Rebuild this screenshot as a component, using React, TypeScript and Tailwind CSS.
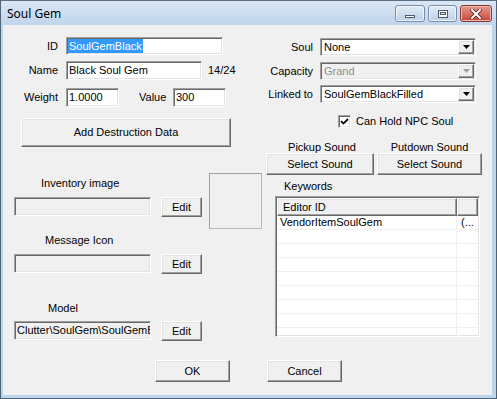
import React from "react";

const sunken =
  "border border-t-[#a0a0a0] border-l-[#a0a0a0] border-r-white border-b-white shadow-[inset_1px_1px_0_#696969,inset_-1px_-1px_0_#e3e3e3]";
const raised =
  "border border-t-white border-l-white border-r-[#696969] border-b-[#696969] shadow-[inset_-1px_-1px_0_#a0a0a0,inset_1px_1px_0_#e3e3e3]";

function Btn({ w, h, children, className = "" }: { w: string; h: string; children?: React.ReactNode; className?: string }) {
  return (
    <div className={`${raised} ${w} ${h} bg-[#f0f0f0] flex items-center justify-center text-black ${className}`}>
      {children}
    </div>
  );
}

function Arrow({ color }: { color: string }) {
  return (
    <svg width="7" height="4" viewBox="0 0 7 4">
      <path d="M0 0H7L3.5 4Z" fill={color} />
    </svg>
  );
}

function Combo({ value, disabled = false }: { value: string; disabled?: boolean }) {
  return (
    <div
      className={`${sunken} w-[156px] h-[18px] p-[1px] flex items-stretch ${disabled ? "bg-[#f0f0f0] text-[#8d8d8d]" : "bg-white text-black"}`}
    >
      <div className="flex-1 flex items-center pl-[2px] whitespace-nowrap overflow-hidden">{value}</div>
      <div className={`${raised} w-[16px] bg-[#f0f0f0] flex items-center justify-center`}>
        <Arrow color={disabled ? "#a0a0a0" : "#000"} />
      </div>
    </div>
  );
}

function Field({ w, h, bg = "bg-white", children }: { w: string; h: string; bg?: string; children?: React.ReactNode }) {
  return (
    <div className={`${sunken} ${w} ${h} ${bg} flex items-center pl-[2px] whitespace-nowrap overflow-hidden`}>
      {children}
    </div>
  );
}

export default function App() {
  return (
    <div className="w-[497px] h-[399px] flex flex-col bg-[#bfd5ec] border-l border-r border-b border-[#4f6378] font-['Liberation_Sans',Arial,sans-serif] text-[11px] leading-[13px] text-black overflow-hidden">
      {/* Title bar */}
      <div className="h-[25px] shrink-0 flex items-start border-t border-[#5b6f86] bg-gradient-to-b from-[#dbe7f4] to-[#bfd5ec] pr-[4px]">
        <div className="pl-[6px] pt-[5px] font-['Noto_Sans',sans-serif] text-[12px] leading-[16px] text-black flex-1">
          Soul Gem
        </div>
        <div className="flex gap-[3px] mt-[4px]">
          <div className="w-[30px] h-[17px] rounded-[3px] border border-[#7a8ea8] bg-gradient-to-b from-[#e4edf7] to-[#bccfe6] shadow-[inset_0_0_0_1px_#eef4fb] flex items-end justify-center pb-[3px]">
            <div className="w-[10px] h-[3px] bg-white border border-[#4a5b70]" />
          </div>
          <div className="w-[29px] h-[17px] rounded-[3px] border border-[#7a8ea8] bg-gradient-to-b from-[#e4edf7] to-[#bccfe6] shadow-[inset_0_0_0_1px_#eef4fb] flex items-center justify-center">
            <div className="w-[10px] h-[8px] border border-[#4a5b70] bg-white flex items-center justify-center">
              <div className="w-[6px] h-[3px] border border-[#4a5b70] bg-[#dbe5f1]" />
            </div>
          </div>
          <div className="w-[32px] h-[17px] rounded-[3px] border border-[#8a3a36] bg-gradient-to-b from-[#e49a8e] to-[#c5453a] shadow-[inset_0_0_0_1px_#eeb6ab] flex items-center justify-center">
            <svg width="12" height="10" viewBox="0 0 12 10">
              <path d="M2 1L10 9M10 1L2 9" stroke="#5a1f1b" strokeWidth="3.6" strokeLinecap="square" />
              <path d="M2 1L10 9M10 1L2 9" stroke="#ffffff" strokeWidth="2" strokeLinecap="square" />
            </svg>
          </div>
        </div>
      </div>

      {/* Client area */}
      <div className="flex-1 ml-[2px] mr-[4px] mb-[3px] bg-[#f0f0f0] flex flex-col">
        <div className="flex items-start pt-[12px]">
          {/* Left column */}
          <div className="ml-[11px] w-[248px] flex flex-col">
            <div className="flex items-center h-[18px]">
              <div className="w-[44px] text-right">ID</div>
              <div className="ml-[8px]">
                <div className={`${sunken} w-[157px] h-[18px] bg-white flex items-stretch p-[1px]`}>
                  <span className="bg-[#3399ff] text-white flex items-center px-[1px]">SoulGemBlack</span>
                </div>
              </div>
            </div>
            <div className="flex items-center h-[19px] mt-[6px]">
              <div className="w-[44px] text-right">Name</div>
              <div className="ml-[8px]">
                <Field w="w-[136px]" h="h-[19px]">Black Soul Gem</Field>
              </div>
              <div className="ml-[6px]">14/24</div>
            </div>
            <div className="flex items-center h-[19px] mt-[8px]">
              <div className="w-[44px] text-right">Weight</div>
              <div className="ml-[8px]">
                <Field w="w-[53px]" h="h-[19px]">1.0000</Field>
              </div>
              <div className="ml-[20px] w-[30px]">Value</div>
              <div className="ml-[4px]">
                <Field w="w-[53px]" h="h-[19px]">300</Field>
              </div>
            </div>
            <Btn w="w-[210px]" h="h-[29px]" className="mt-[11px] ml-[7px]">
              Add Destruction Data
            </Btn>
            <div className="flex items-start">
              <div className="w-[188px] flex flex-col">
                <div className="mt-[30px] ml-[27px]">Inventory image</div>
                <div className="mt-[7px] flex items-start">
                  <Field w="w-[137px]" h="h-[19px]" bg="bg-[#f0f0f0]" />
                  <Btn w="w-[41px]" h="h-[20px]" className="ml-[10px]">Edit</Btn>
                </div>
                <div className="mt-[17px] ml-[31px]">Message Icon</div>
                <div className="mt-[7px] flex items-start">
                  <Field w="w-[137px]" h="h-[19px]" bg="bg-[#f0f0f0]" />
                  <Btn w="w-[41px]" h="h-[20px]" className="ml-[10px]">Edit</Btn>
                </div>
                <div className="mt-[28px] ml-[34px]">Model</div>
                <div className="mt-[6px] flex items-start">
                  <Field w="w-[137px]" h="h-[19px]" bg="bg-[#f0f0f0]">Clutter\SoulGem\SoulGemB</Field>
                  <Btn w="w-[41px]" h="h-[20px]" className="ml-[10px]">Edit</Btn>
                </div>
              </div>
              <div className="ml-[7px] mt-[26px] w-[54px] h-[56px] border border-[#a0a0a0] border-r-[#b8b8b8] border-b-[#b8b8b8] bg-[#f0f0f0]" />
            </div>
          </div>

          {/* Right column */}
          <div className="ml-[4px] w-[216px] flex flex-col mt-[1px]">
            <div className="flex items-center h-[18px]">
              <div className="w-[47px] text-right">Soul</div>
              <div className="ml-[7px]">
                <Combo value="None" />
              </div>
            </div>
            <div className="flex items-center h-[18px] mt-[6px]">
              <div className="w-[47px] text-right">Capacity</div>
              <div className="ml-[7px]">
                <Combo value="Grand" disabled />
              </div>
            </div>
            <div className="flex items-center h-[18px] mt-[5px]">
              <div className="w-[47px] text-right whitespace-nowrap">Linked to</div>
              <div className="ml-[7px]">
                <Combo value="SoulGemBlackFilled" />
              </div>
            </div>
            <div className="flex items-center h-[13px] mt-[12px] ml-[72px]">
              <div className={`${sunken} w-[13px] h-[13px] bg-white flex items-center justify-center`}>
                <svg width="9" height="9" viewBox="0 0 9 9">
                  <path d="M1 4.2L3.4 6.6L8 2" stroke="#000" strokeWidth="1.8" fill="none" />
                </svg>
              </div>
              <div className="ml-[5px]">Can Hold NPC Soul</div>
            </div>
            <div className="flex mt-[13px]">
              <div className="w-[108px] flex flex-col items-center">
                <div className="leading-[12px] h-[12px] pl-[4px]">Pickup Sound</div>
                <Btn w="w-[108px]" h="h-[22px]">Select Sound</Btn>
              </div>
              <div className="w-[105px] ml-[3px] flex flex-col items-center">
                <div className="leading-[12px] h-[12px]">Putdown Sound</div>
                <Btn w="w-[105px]" h="h-[22px]">Select Sound</Btn>
              </div>
            </div>
            <div className="mt-[5px] ml-[18px]">Keywords</div>
            <div className={`${sunken} mt-[3px] ml-[9px] w-[205px] h-[141px] bg-white p-[1px] flex flex-col overflow-hidden`}>
              <div className="flex h-[18px] shrink-0">
                <div className={`${raised} w-[180px] bg-[#f0f0f0] flex items-center pl-[5px]`}>Editor ID</div>
                <div className={`${raised} flex-1 bg-[#f0f0f0]`} />
              </div>
              {["VendorItemSoulGem", "", "", "", "", "", "", "", ""].map((t, i) => (
                <div key={i} className="flex h-[14px] shrink-0 border-b border-[#f0f0f0]">
                  <div className="w-[180px] border-r border-[#f0f0f0] flex items-center pl-[3px]">{t}</div>
                  <div className="flex-1 flex items-center pl-[4px]">{t ? "(..." : ""}</div>
                </div>
              ))}
            </div>
          </div>
        </div>

        {/* Bottom buttons */}
        <div className="flex mt-[19px] ml-[152px]">
          <Btn w="w-[75px]" h="h-[22px]">OK</Btn>
          <Btn w="w-[75px]" h="h-[22px]" className="ml-[37px]">Cancel</Btn>
        </div>
      </div>
    </div>
  );
}
